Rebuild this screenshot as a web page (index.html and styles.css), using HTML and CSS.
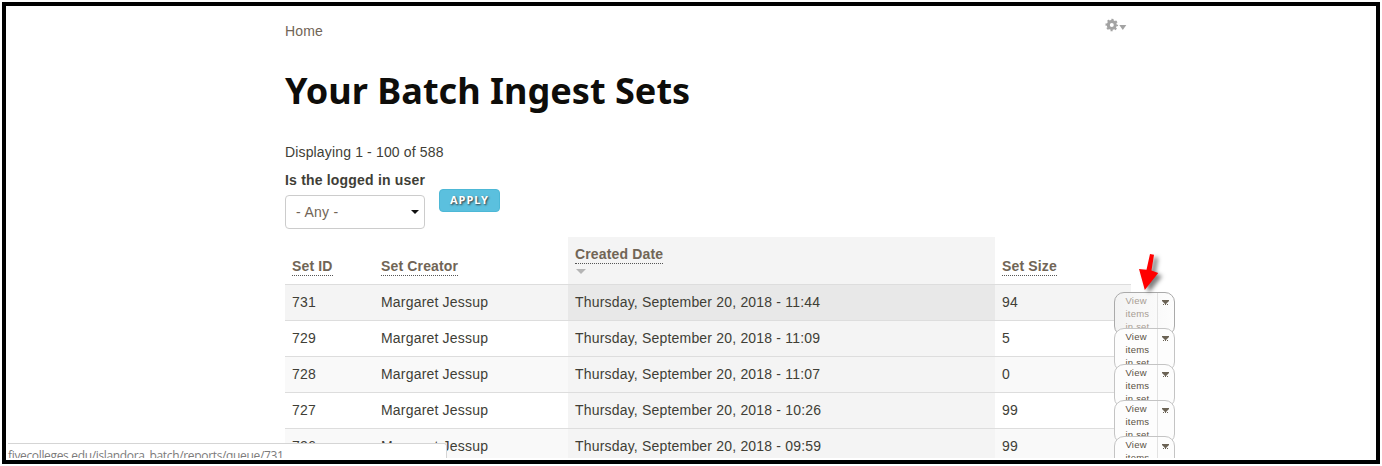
FILE: index.html
```
<!DOCTYPE html>
<html lang="en">
<head>
<meta charset="utf-8">
<title>Your Batch Ingest Sets</title>
<link rel="stylesheet" href="styles.css">
</head>
<body>
<div class="frame">
  <div class="viewport">
    <main class="page">
      <div class="topline">
        <a class="crumb">Home</a>
        <svg class="gear" width="22" height="14" viewBox="0 0 22 14">
          <g fill="none" stroke="#a3a3a3"><circle cx="6.8" cy="7" r="3.5" stroke-width="3"/>
          <circle cx="6.8" cy="7" r="5.3" stroke-width="2" stroke-dasharray="2.08 2.08" stroke-dashoffset="1.04"/></g>
          <path d="M14.3 7h7l-3.500 5z" fill="#a3a3a3"/>
        </svg>
      </div>
      <h1 class="title">Your Batch Ingest Sets</h1>
      <p class="summary">Displaying 1 - 100 of 588</p>
      <form class="filters">
        <div class="field">
          <label class="label">Is the logged in user</label>
          <div class="select"><span>- Any -</span><svg width="8" height="4" viewBox="0 0 8 4"><path d="M0 0h8L4 4z" fill="#111"/></svg></div>
        </div>
        <button class="apply" type="button">APPLY</button>
      </form>
      <div class="table">
        <div class="row head">
          <div class="cell"><span class="sort">Set ID</span></div>
          <div class="cell"><span class="sort">Set Creator</span></div>
          <div class="cell date"><span class="sort">Created Date</span><svg class="desc" width="10" height="5" viewBox="0 0 10 5"><path d="M0 0h10L5 5z" fill="#b5b5b5"/></svg></div>
          <div class="cell"><span class="sort">Set Size</span></div>
        </div>
        <div class="row hover"><div class="cell">731</div><div class="cell">Margaret Jessup</div><div class="cell date">Thursday, September 20, 2018 - 11:44</div><div class="cell">94</div>
          <div class="drop"><span class="view">View items in set</span><span class="toggle"><svg width="7" height="6" viewBox="0 0 7 6"><path d="M0 0h7v1L4 4H3L0 1z" fill="#6b6355"/><path d="M1 4.500h5" stroke="#6b6355" stroke-dasharray="1 1"/></svg></span></div></div>
        <div class="row"><div class="cell">729</div><div class="cell">Margaret Jessup</div><div class="cell date">Thursday, September 20, 2018 - 11:09</div><div class="cell">5</div>
          <div class="drop"><span class="view">View items in set</span><span class="toggle"><svg width="7" height="6" viewBox="0 0 7 6"><path d="M0 0h7v1L4 4H3L0 1z" fill="#6b6355"/><path d="M1 4.500h5" stroke="#6b6355" stroke-dasharray="1 1"/></svg></span></div></div>
        <div class="row odd"><div class="cell">728</div><div class="cell">Margaret Jessup</div><div class="cell date">Thursday, September 20, 2018 - 11:07</div><div class="cell">0</div>
          <div class="drop"><span class="view">View items in set</span><span class="toggle"><svg width="7" height="6" viewBox="0 0 7 6"><path d="M0 0h7v1L4 4H3L0 1z" fill="#6b6355"/><path d="M1 4.500h5" stroke="#6b6355" stroke-dasharray="1 1"/></svg></span></div></div>
        <div class="row"><div class="cell">727</div><div class="cell">Margaret Jessup</div><div class="cell date">Thursday, September 20, 2018 - 10:26</div><div class="cell">99</div>
          <div class="drop"><span class="view">View items in set</span><span class="toggle"><svg width="7" height="6" viewBox="0 0 7 6"><path d="M0 0h7v1L4 4H3L0 1z" fill="#6b6355"/><path d="M1 4.500h5" stroke="#6b6355" stroke-dasharray="1 1"/></svg></span></div></div>
        <div class="row odd"><div class="cell">726</div><div class="cell">Margaret Jessup</div><div class="cell date">Thursday, September 20, 2018 - 09:59</div><div class="cell">99</div>
          <div class="drop"><span class="view">View items in set</span><span class="toggle"><svg width="7" height="6" viewBox="0 0 7 6"><path d="M0 0h7v1L4 4H3L0 1z" fill="#6b6355"/><path d="M1 4.500h5" stroke="#6b6355" stroke-dasharray="1 1"/></svg></span></div></div>
      </div>
    </main>
    <div class="status">fivecolleges.edu/islandora_batch/reports/queue/731</div>
    <svg class="arrow" width="32" height="46" viewBox="0 0 32 46"><path d="M12 4l4 .8-2.500 15.700 6.700 2.500L6.800 40 1 19l7.500 .7z" fill="#f00"/></svg>
  </div>
</div>
</body>
</html>
```
FILE: styles.css
```
* { box-sizing: border-box; }
body { margin: 0; background: #fff; font: 14px/20px "Liberation Sans", Arial, sans-serif; color: #403e36; overflow: hidden; }
.frame { width: 1378px; height: 462px; margin: 2px; border: 4px solid #000; }
.viewport { position: relative; height: 452px; overflow: hidden; }
.page { width: 847px; margin-left: 279px; padding-top: 12px; }
.topline { display: flex; justify-content: space-between; height: 26px; }
.crumb { color: #716556; padding-top: 3px; letter-spacing: .12px; }
.gear { margin-right: 5px; }
.title { margin: 19px 0 0; font: bold 36.1px/54px "Noto Sans", sans-serif; color: #0e0d0a; white-space: nowrap; }
.summary { margin: 25px 0 0; letter-spacing: .15px; }
.filters { display: flex; height: 75px; padding-top: 8px; }
.field { width: 140px; }
.label { display: block; font-weight: bold; letter-spacing: .19px; white-space: nowrap; }
.select { display: flex; align-items: center; justify-content: space-between; height: 34px; margin-top: 5px; padding: 0 5px 0 10px; border: 1px solid #ccc; border-radius: 4px; color: #716556; letter-spacing: .3px; }
.apply { width: 61px; height: 23px; margin: 19px 0 0 14px; padding: 0 0 2px; border: 1px solid #4db8d6; border-radius: 4px; background: #5bc0de; color: #fff; font: bold 11px/20px "Noto Sans", sans-serif; letter-spacing: 1px; text-shadow: 1px 1px 2px #333; }
.row { position: relative; display: grid; grid-template-columns: 89px 194px 427px 136px; width: 846px; height: 36px; border-top: 1px solid #ddd; background: #fff; letter-spacing: .19px; }
.cell { padding: 7px 7px 0; }
.date { background: #f4f4f4; }
.head { height: 47px; border: 0; font-weight: bold; color: #716556; }
.head .cell { padding-top: 19px; }
.head .date { padding-top: 7px; }
.sort { display: inline-block; line-height: 18px; border-bottom: 1px dotted #555; white-space: nowrap; letter-spacing: .15px; }
.desc { display: block; margin: 5px 0 0 1px; }
.odd { background: #f9f9f9; }
.hover { background: #f4f4f4; }
.hover .date { background: #e8e8e8; }
.drop { position: absolute; z-index: 1; left: 829px; top: 7px; display: flex; width: 61px; height: 44px; border: 1px solid #c4c4c4; border-radius: 10px; background: #fdfdfd; font-size: 9.5px; line-height: 13px; letter-spacing: .2px; color: #5b5143; }
.view { width: 43px; padding: 1px 6px 0 10.500px; border-right: 1px solid #e2e2e2; }
.toggle { padding: 7px 0 0 4px; line-height: 0; }
.hover .drop { border-color: #aaa; background: linear-gradient(90deg, #f3f3f3, #fdfdfd); }
.hover .view { color: #a89d94; }
.status { position: absolute; z-index: 2; left: 2px; top: 437px; width: 439px; height: 24px; border: solid #d5d5d5; border-width: 1px 1px 0 0; border-radius: 0 3px 0 0; background: #fff; color: #7b7b7b; font: 12px/23px "Open Sans", sans-serif; letter-spacing: -.34px; white-space: nowrap; }
.arrow { position: absolute; z-index: 3; left: 1132px; top: 244px; filter: drop-shadow(4px 3px 2px rgba(0, 0, 0, .5)); }
```
